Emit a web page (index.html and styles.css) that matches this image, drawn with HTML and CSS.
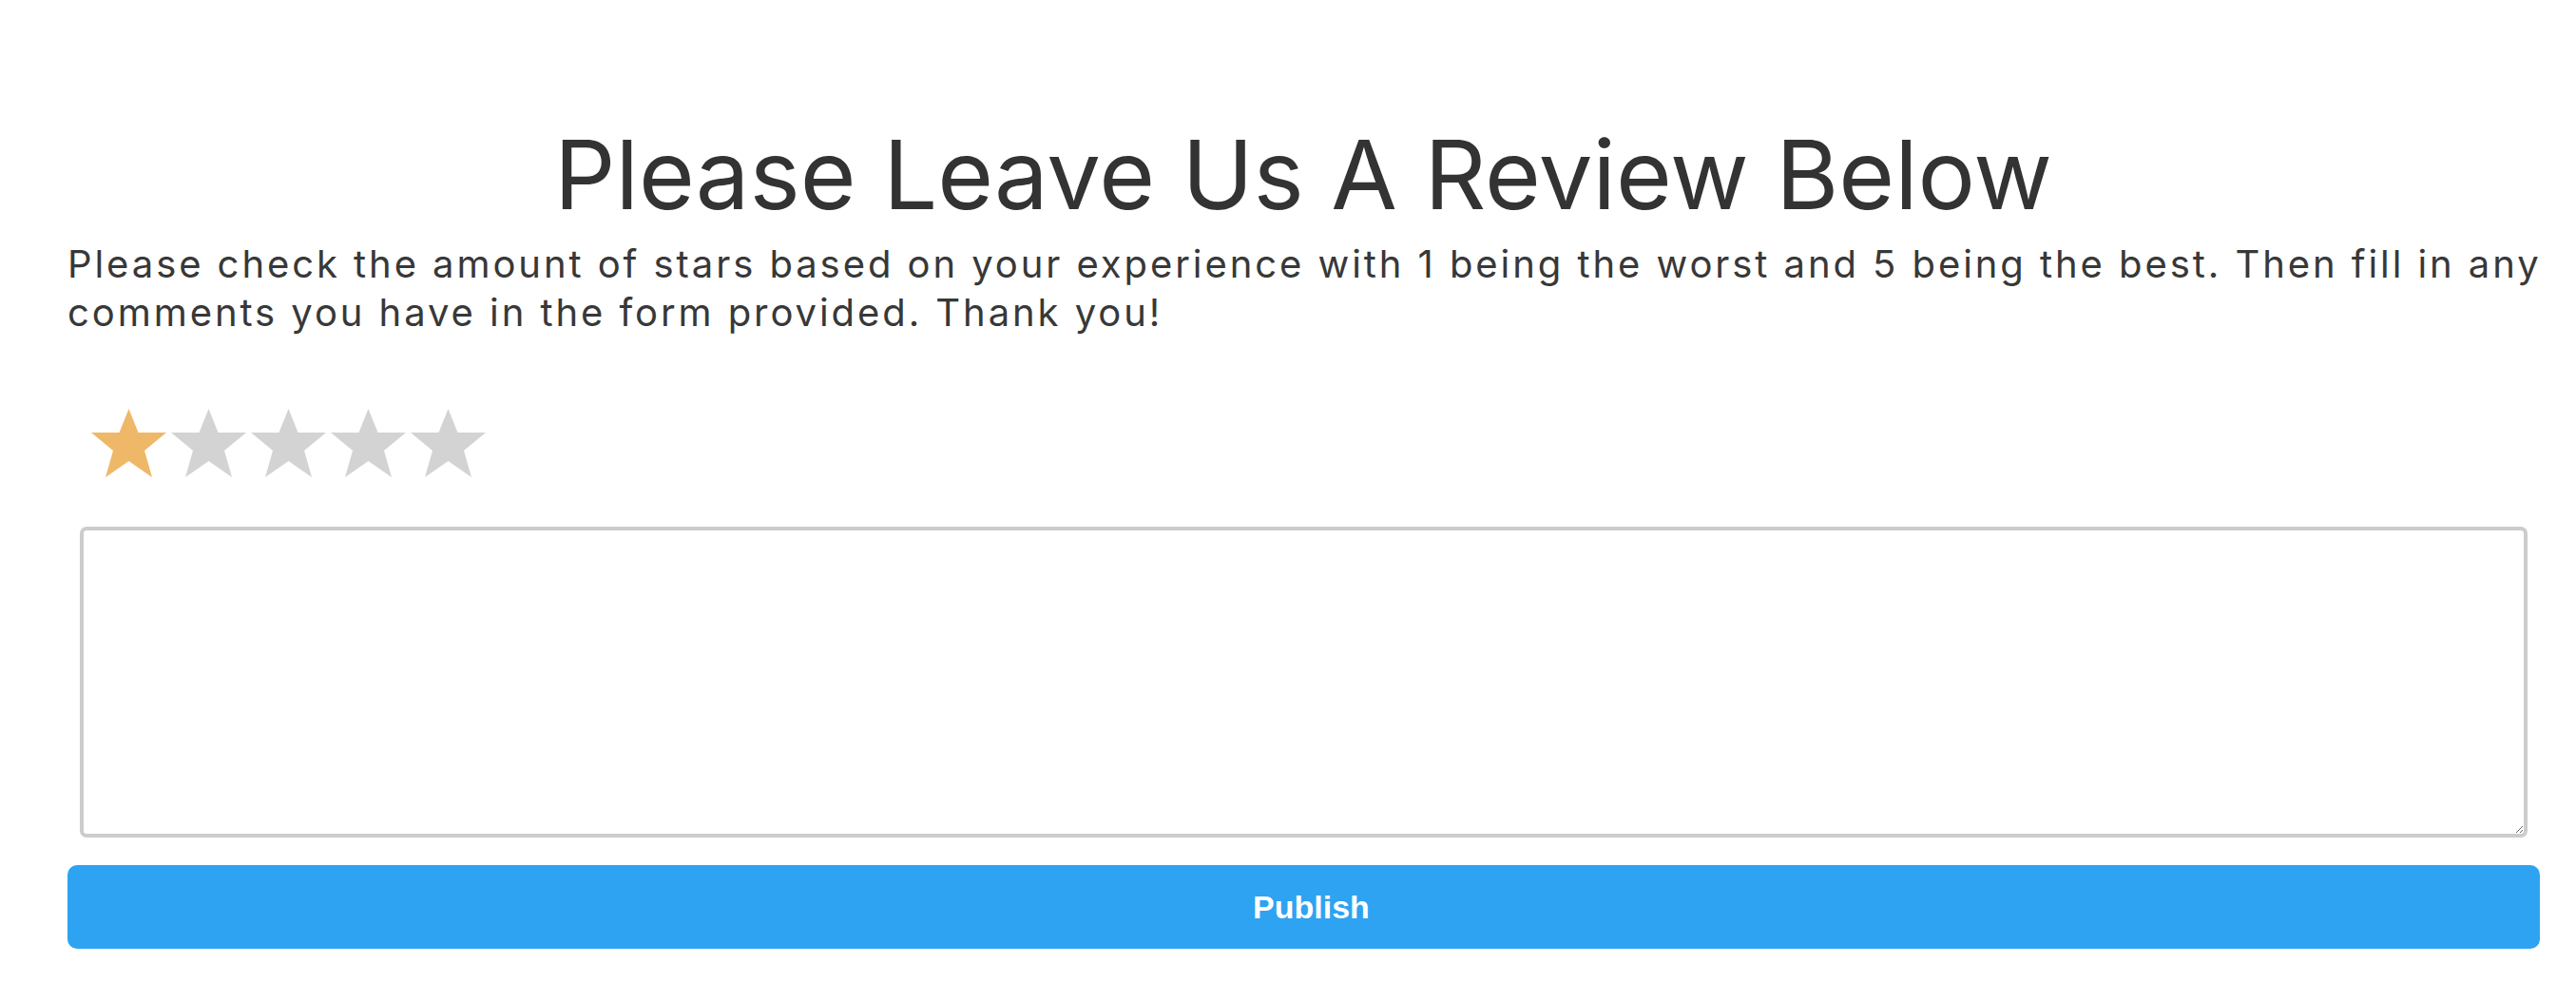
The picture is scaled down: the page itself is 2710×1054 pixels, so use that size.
FILE: index.html
```html
<!DOCTYPE html>
<html lang="en">
<head>
<meta charset="utf-8">
<title>Leave a Review</title>
<link rel="stylesheet" href="styles.css">
</head>
<body>
<main class="page">
  <h1 class="title">Please Leave Us A Review Below</h1>
  <p class="intro">Please check the amount of stars based on your experience with 1 being the worst and 5 being the best. Then fill in any comments you have in the form provided. Thank you!</p>
  <form class="review-form">
    <div class="stars">
      <svg class="star star-on" viewBox="0 0 79 72"><polygon points="39.5,0 49.5,25 79,25 56,44 64,72 39.5,55 15,72 23,44 0,25 29.5,25"/></svg>
      <svg class="star" viewBox="0 0 79 72"><polygon points="39.5,0 49.5,25 79,25 56,44 64,72 39.5,55 15,72 23,44 0,25 29.5,25"/></svg>
      <svg class="star" viewBox="0 0 79 72"><polygon points="39.5,0 49.5,25 79,25 56,44 64,72 39.5,55 15,72 23,44 0,25 29.5,25"/></svg>
      <svg class="star" viewBox="0 0 79 72"><polygon points="39.5,0 49.5,25 79,25 56,44 64,72 39.5,55 15,72 23,44 0,25 29.5,25"/></svg>
      <svg class="star" viewBox="0 0 79 72"><polygon points="39.5,0 49.5,25 79,25 56,44 64,72 39.5,55 15,72 23,44 0,25 29.5,25"/></svg>
    </div>
    <textarea class="comments"></textarea>
    <button type="button" class="publish">Publish</button>
  </form>
</main>
</body>
</html>
```
FILE: styles.css
```css
html, body {
  margin: 0;
  padding: 0;
  background: #ffffff;
}

.page {
  width: 2600px;
  padding: 128px 0 0 71px;
  color: #333333;
  font-family: Inter, "Open Sans", sans-serif;
}

.title {
  margin: 0;
  font-size: 101px;
  font-weight: 400;
  line-height: 110px;
  text-align: center;
  color: #333333;
}

.intro {
  margin: 14px -24px 0 0;
  font-size: 40px;
  line-height: 51px;
  letter-spacing: 2.93px;
  color: #383838;
}

.review-form {
  display: flex;
  flex-direction: column;
  align-items: flex-start;
}

.stars {
  display: flex;
  gap: 5px;
  margin: 76px 0 0 25px;
}

.star {
  display: block;
  width: 79px;
  height: 72px;
  fill: #d3d3d3;
}

.star-on {
  fill: #eeb868;
}

.comments {
  display: block;
  box-sizing: border-box;
  width: 2575px;
  height: 327px;
  margin: 52px 0 0 13px;
  padding: 8px;
  border: 4px solid #cccccc;
  border-radius: 7px;
  background: #ffffff;
  font-family: Inter, sans-serif;
  font-size: 30px;
  outline: none;
}

.publish {
  display: block;
  box-sizing: border-box;
  width: 2601px;
  height: 88px;
  margin: 29px 0 0;
  padding: 0 0 0 16px;
  border: none;
  border-radius: 10px;
  background: #2ea3f2;
  color: #ffffff;
  font-family: "Liberation Sans", Arial, sans-serif;
  font-weight: 700;
  font-size: 34px;
  cursor: pointer;
}
```
